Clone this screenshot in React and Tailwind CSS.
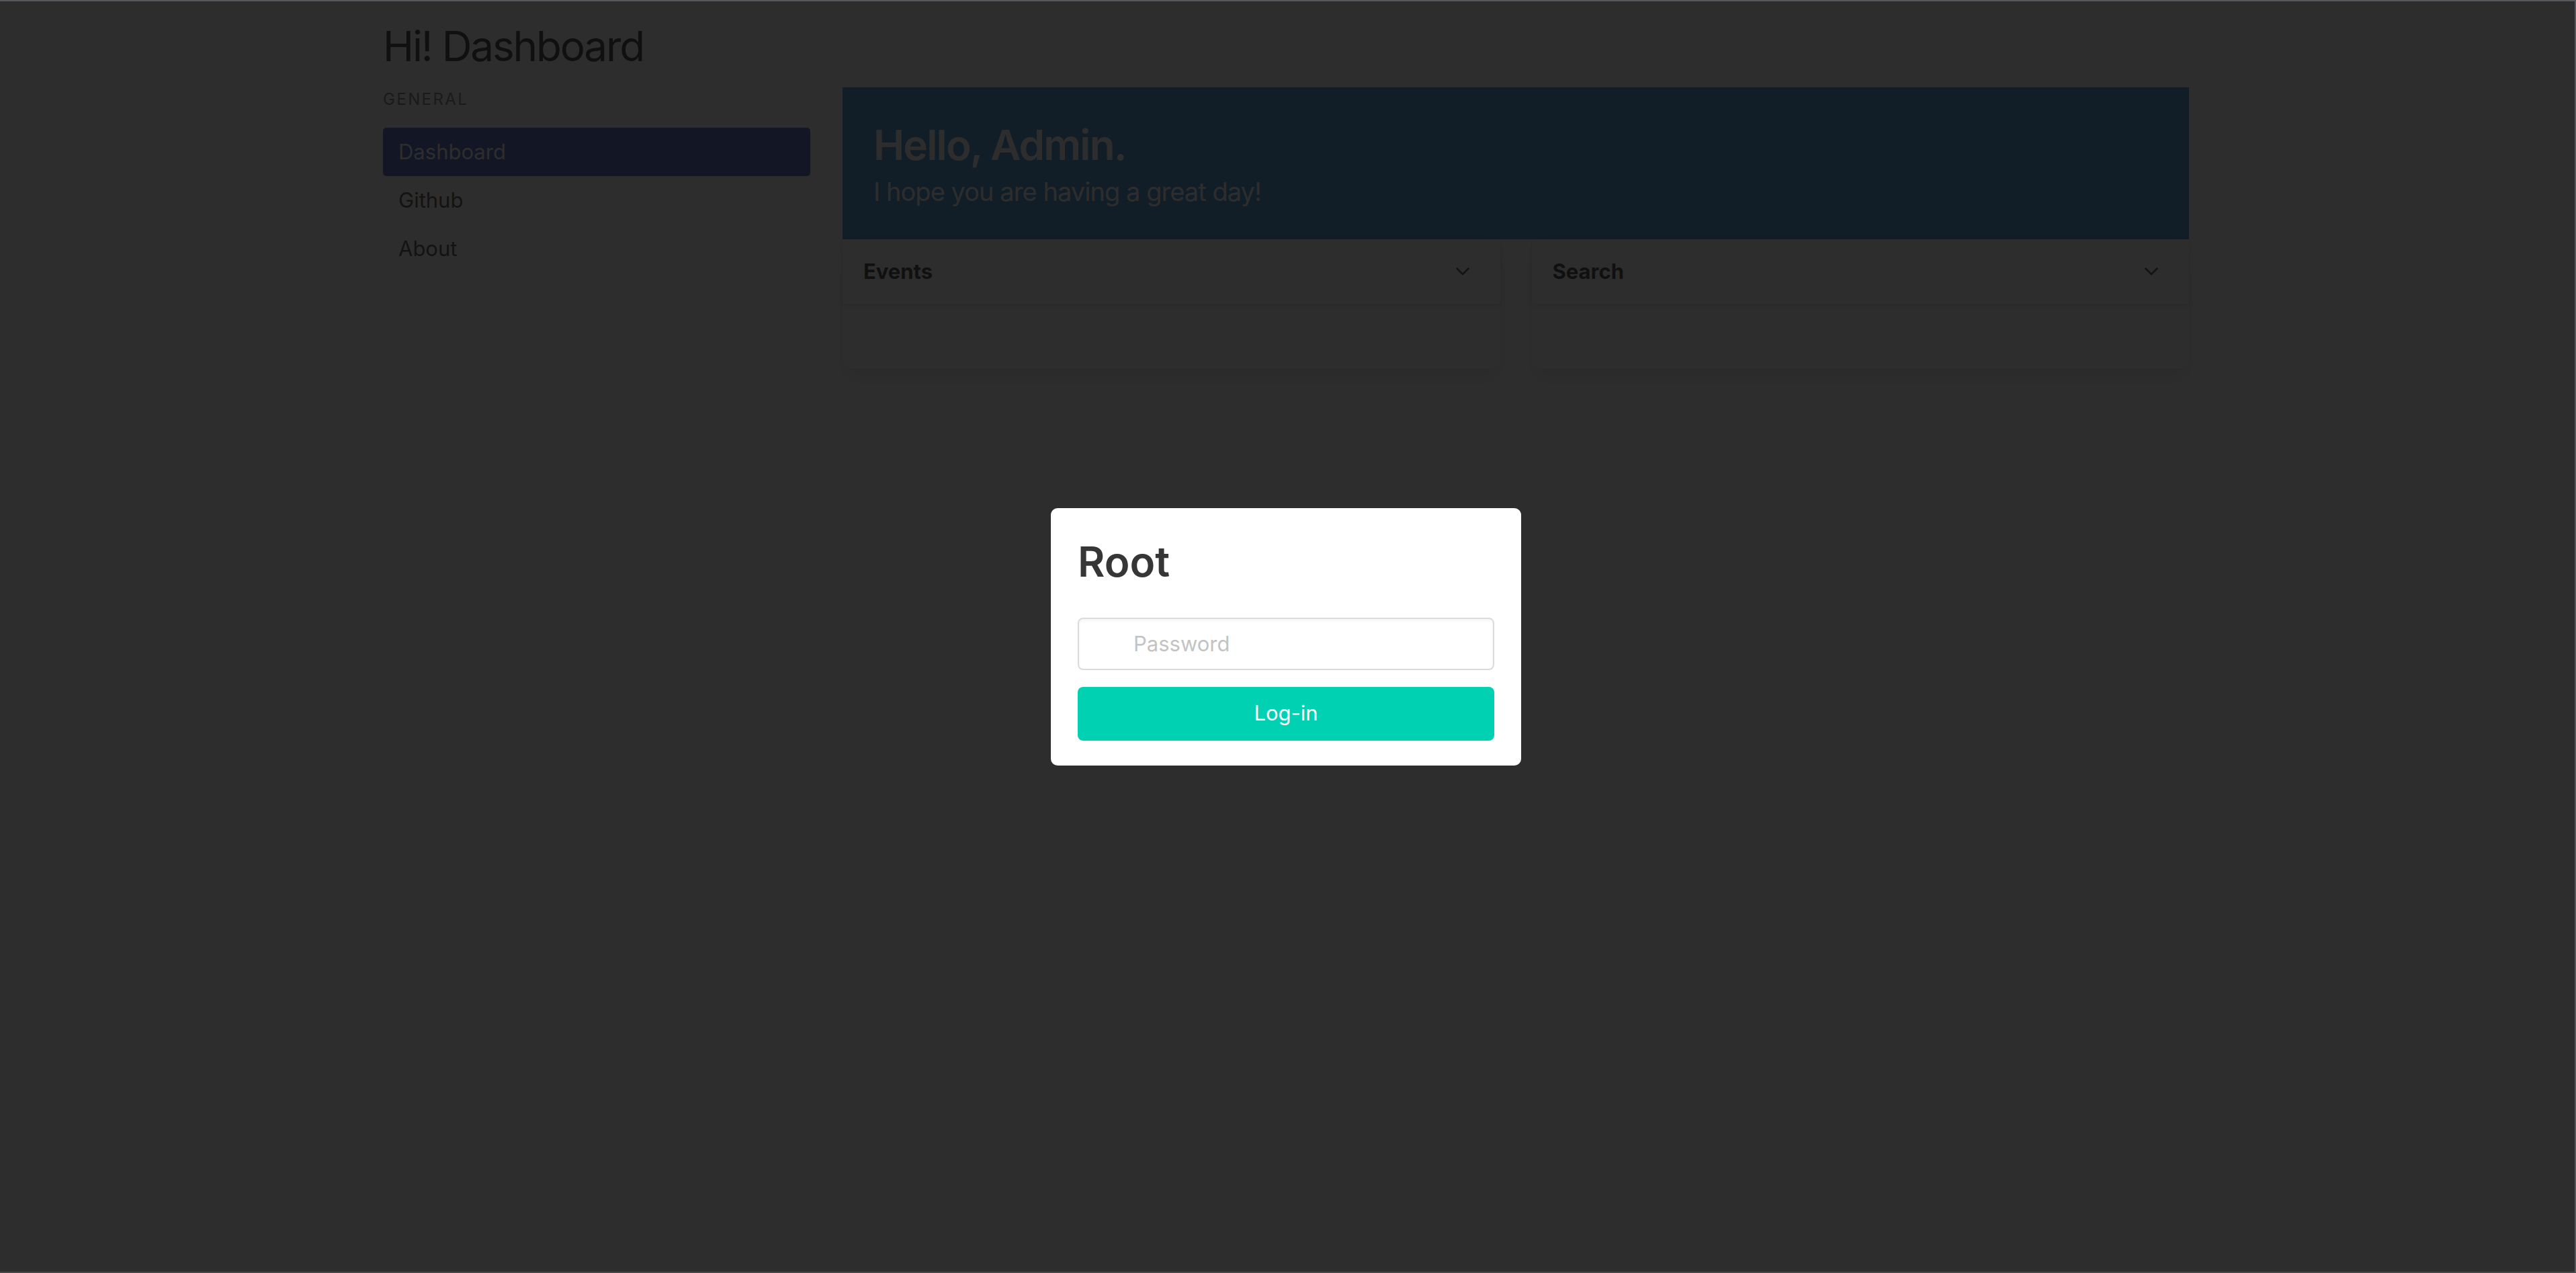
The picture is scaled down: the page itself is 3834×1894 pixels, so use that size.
import React from "react";

function Chevron() {
  return (
    <svg width="20" height="12" viewBox="0 0 20 12" fill="none" className="block">
      <polyline points="1.5,1.5 10,10 18.5,1.5" stroke="#4a4a4a" strokeWidth="2.6" strokeLinecap="round" strokeLinejoin="round" />
    </svg>
  );
}

function Card({ title }) {
  return (
    <div className="flex-1 rounded-b-[12px] bg-white shadow-[0_16px_31px_-4px_rgba(10,10,10,0.1),0_0_0_1px_rgba(10,10,10,0.02)]">
      <header className="flex h-[96px] items-center justify-between pl-[31px] pr-[46px] shadow-[0_4px_8px_rgba(10,10,10,0.1)]">
        <p className="text-[31px] font-bold leading-[46px] text-[#363636]">{title}</p>
        <Chevron />
      </header>
      <div className="h-[96px]" />
    </div>
  );
}

function MenuItem({ label, active }) {
  return (
    <li>
      <a
        className={
          active
            ? "block rounded-[5px] bg-[#485fc7] px-[23px] py-[13px] text-[31px] leading-[46px] text-white"
            : "block rounded-[5px] px-[23px] py-[13px] text-[31px] leading-[46px] text-[#4a4a4a]"
        }
      >
        {label}
      </a>
    </li>
  );
}

export default function App() {
  return (
    <div className="relative min-h-screen bg-white font-[family-name:Inter,sans-serif]">
      <div className="ml-[570px] w-[2688px] pt-[32px]">
        <h1 className="text-[62px] leading-[74px] tracking-[-0.035em] text-[#363636]">Hi! Dashboard</h1>
        <div className="mt-[24px] flex gap-[48px]">
          <aside className="w-[636px] shrink-0">
            <p className="text-[24px] uppercase leading-[36px] tracking-[0.1em] text-[#7a7a7a]">General</p>
            <ul className="mt-[24px]">
              <MenuItem label="Dashboard" active />
              <MenuItem label="Github" />
              <MenuItem label="About" />
            </ul>
          </aside>
          <main className="flex-1">
            <section className="bg-[#3e8ed0] pb-[46px] pl-[46px] pt-[50px]">
              <h2 className="text-[62px] font-semibold leading-[71px] tracking-[-0.03em] text-white">Hello, Admin.</h2>
              <p className="mt-[9px] text-[38px] leading-[50px] tracking-[-0.025em] text-white">I hope you are having a great day!</p>
            </section>
            <div className="flex gap-[47px]">
              <Card title="Events" />
              <Card title="Search" />
            </div>
          </main>
        </div>
      </div>

      <div className="fixed inset-0 bg-[rgba(10,10,10,0.86)]" />

      <div className="fixed inset-0 flex items-center justify-center pr-[6px]">
        <div className="w-[700px] rounded-[10px] bg-white px-[40px] pb-[37px] pt-[45px]">
          <h3 className="text-[62px] font-semibold leading-[70px] text-[#363636]">Root</h3>
          <input
            type="password"
            placeholder="Password"
            className="mt-[48px] block h-[78px] w-full rounded-[8px] border-2 border-[#dbdbdb] bg-white pl-[81px] text-[31px] text-[#363636] shadow-[inset_0_2px_4px_rgba(10,10,10,0.05)] outline-none placeholder:text-[#c3c3c3]"
          />
          <button className="mt-[25px] block h-[80px] w-full rounded-[8px] bg-[#00d1b2] text-[31px] text-white">
            Log-in
          </button>
        </div>
      </div>

      <div className="pointer-events-none fixed inset-0 border-b-2 border-r-2 border-t-2 border-b-[#474747] border-r-[#57565c] border-t-[#57565c]" />
    </div>
  );
}
